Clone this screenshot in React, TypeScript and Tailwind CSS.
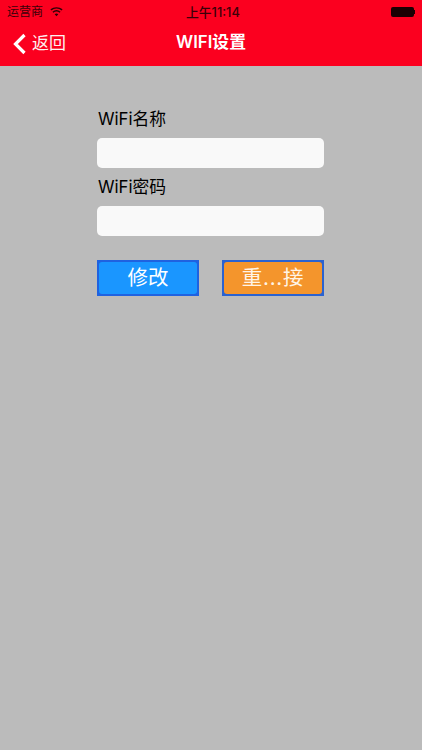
const cjk = "font-['Inter','Noto_Sans_CJK_SC',sans-serif]";

export default function App() {
  return (
    <div className={`w-[422px] h-[750px] bg-[#bbbbbb] flex flex-col ${cjk}`}>
      <div className="bg-[#fb001f] h-[66px] shrink-0 flex flex-col">
        <div className="h-[20px] pt-[3px] relative flex items-center pl-[7px] text-[12px] text-[#3a0008]">
          <span>运营商</span>
          <svg className="ml-[7px]" width="13" height="10" viewBox="0 0 15 11">
            <path d="M7.5 10.5 L5.4 8 A3.4 3.4 0 0 1 9.6 8 Z M3.9 6.4 L2.8 5.1 A7.2 7.2 0 0 1 12.2 5.1 L11.1 6.4 A5.6 5.6 0 0 0 3.9 6.4 Z M1.6 3.7 L0.5 2.4 A11 11 0 0 1 14.5 2.4 L13.4 3.7 A9.3 9.3 0 0 0 1.6 3.7 Z" fill="#2a0006" />
          </svg>
          <span className="absolute left-[186px] top-[3px] text-[12.8px] font-medium">上午11:14</span>
          <div className="ml-auto mr-[7px] flex items-center">
            <div className="w-[23px] h-[10px] bg-[#1a0003] rounded-[2px]" />
            <div className="w-[1.5px] h-[4px] bg-[#1a0003]" />
          </div>
        </div>
        <div className="flex-1 relative flex items-center justify-center text-white">
          <div className="absolute left-[12px] top-[11px] flex items-center">
            <svg width="15" height="22" viewBox="0 0 15 22" fill="none">
              <path d="M12.5 2 L3.5 11 L12.5 20" stroke="white" strokeWidth="3.2" />
            </svg>
            <span className="ml-[5px] text-[17px] text-[#fff0f0]">返回</span>
          </div>
          <span className="text-[16.8px] font-semibold">WIFI设置</span>
        </div>
      </div>
      <div className="pl-[97px] pt-[41px] w-[324px] flex flex-col">
        <div className="pl-[1px] text-[16.8px] leading-[24px] text-black">WiFi名称</div>
        <div className="mt-[7px] h-[30px] bg-[#f9f9f9] rounded-[5px]" />
        <div className="mt-[7px] pl-[1px] text-[16.8px] leading-[24px] text-black">WiFi密码</div>
        <div className="mt-[7px] h-[30px] bg-[#f9f9f9] rounded-[5px]" />
        <div className="mt-[24px] flex justify-between">
          <button className="w-[102px] h-[36px] bg-[#1f62e0] p-[2px] flex">
            <span className="flex-1 bg-[#1a96ff] rounded-[3px] text-white text-[20.5px] flex items-center justify-center">修改</span>
          </button>
          <button className="w-[102px] h-[36px] bg-[#2a62d0] p-[2px] flex">
            <span className="flex-1 bg-[#f4952c] rounded-[3px] text-[#fff4e6] text-[20.5px] tracking-[0.8px] flex items-center justify-center">重...接</span>
          </button>
        </div>
      </div>
    </div>
  );
}
